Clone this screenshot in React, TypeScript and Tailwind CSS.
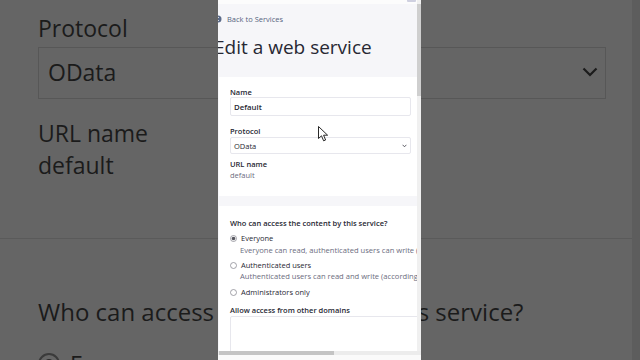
import React from "react";

function Radio({ checked }: { checked?: boolean }) {
  return (
    <svg width="7" height="7" viewBox="0 0 7 7" className="shrink-0">
      <circle cx="3.5" cy="3.5" r="3" fill="#fff" stroke="#8c8c94" strokeWidth="0.8" />
      {checked && <circle cx="3.5" cy="3.5" r="1.8" fill="#55555e" />}
    </svg>
  );
}

export default function App() {
  return (
    <div className="relative w-[640px] h-[360px] overflow-hidden bg-[#656565] font-['Open_Sans',sans-serif]">
      {/* blurred enlarged background */}
      <div className="flex h-full">
        <div className="flex-1 flex flex-col text-[#1b1b1b]">
          <div className="pl-[38px] pr-[26px]">
            <div className="mt-[14px] text-[23px] leading-[28px]">Protocol</div>
            <div className="mt-[5px] h-[52px] border border-[#575757] flex items-center justify-between pl-[9px] pr-[7px] pb-[3px]">
              <span className="text-[23px] leading-[28px]">OData</span>
              <svg width="16" height="10" viewBox="0 0 16 10">
                <path d="M1.5 1.5 L8 8 L14.5 1.5" fill="none" stroke="#1b1b1b" strokeWidth="2.2" />
              </svg>
            </div>
            <div className="mt-[20px] text-[23px] leading-[28px]">URL name</div>
            <div className="mt-[4px] text-[23px] leading-[28px]">default</div>
          </div>
          <div className="mt-[59px] h-[28px] bg-[#616161] border-b border-[#5a5a5a]" />
          <div className="pl-[38px] mt-[59px] text-[24px] leading-[28px] whitespace-nowrap">
            Who can access the content by this service?
          </div>
          <div className="pl-[38px] mt-[27px] flex items-start gap-[10px]">
            <div className="w-[22px] h-[22px] shrink-0 rounded-full border-[2px] border-[#3a3a3a] flex items-center justify-center">
              <div className="w-[10px] h-[10px] rounded-full bg-[#2a2a2a]" />
            </div>
            <span className="text-[23px] leading-[28px] mt-[-3px]">Everyone</span>
          </div>
        </div>
        <div className="w-[8px] bg-[#5d5d5d]" />
      </div>

      {/* portrait video panel */}
      <div className="absolute left-[218px] top-0 w-[203px] h-[360px] flex flex-col bg-[#f6f6f9] overflow-hidden">
        <div className="flex-1 flex min-h-0">
          <div className="flex-1 min-w-0 overflow-hidden flex flex-col">
            <div className="h-[4px] shrink-0 bg-[#fcfcfc]" />
            <div className="ml-[-4px] w-[203px] shrink-0">
              {/* header */}
              <div className="pt-[10px] pb-[18px]">
                <div className="flex items-center h-[10px] gap-[5px]">
                  <svg width="8" height="8" viewBox="0 0 8 8" className="shrink-0">
                    <circle cx="4" cy="4" r="3.5" fill="#5b6b8a" />
                    <path d="M4.8 2 L3 4 L4.8 6" fill="none" stroke="#fff" strokeWidth="0.9" />
                  </svg>
                  <span className="text-[7.5px] leading-[10px] text-[#56657f]">Back to Services</span>
                </div>
                <div className="mt-[11px] text-[19px] leading-[24px] text-[#272833] whitespace-nowrap">
                  Edit a web service
                </div>
              </div>

              {/* card 1 */}
              <div className="ml-[5px] bg-white pl-[11px] pt-[10px] pb-[16px]">
                <div className="text-[7.5px] leading-[10px] font-semibold text-[#272833]">Name</div>
                <div className="w-[181px] h-[19px] border border-[#e7e7ed] rounded-[2px] bg-white flex items-center pl-[3px]">
                  <span className="text-[7.8px] leading-[10px] font-semibold text-[#272833]">Default</span>
                </div>
                <div className="mt-[10px] text-[7.5px] leading-[10px] font-semibold text-[#272833]">Protocol</div>
                <div className="mt-[1px] w-[181px] h-[17px] border border-[#e7e7ed] rounded-[2px] bg-white flex items-center justify-between pl-[3px] pr-[3px]">
                  <span className="text-[7.5px] leading-[10px] text-[#272833]">OData</span>
                  <svg width="5" height="4" viewBox="0 0 5 4">
                    <path d="M0.6 0.8 L2.5 2.8 L4.4 0.8" fill="none" stroke="#3a3a44" strokeWidth="0.8" />
                  </svg>
                </div>
                <div className="mt-[5px] text-[7.5px] leading-[10px] font-semibold text-[#272833]">URL name</div>
                <div className="mt-[1px] text-[7.5px] leading-[10px] text-[#6b6c7e]">default</div>
              </div>

              <div className="h-[10px]" />

              {/* card 2 */}
              <div className="ml-[5px] bg-white pl-[11px] pt-[12px] pb-[20px]">
                <div className="text-[7.5px] leading-[10px] font-semibold text-[#272833] whitespace-nowrap">
                  Who can access the content by this service?
                </div>
                <div className="mt-[5px] flex items-center gap-[4px] h-[10px]">
                  <Radio checked />
                  <span className="text-[7.5px] leading-[10px] text-[#272833]">Everyone</span>
                </div>
                <div className="mt-[2px] pl-[10px] text-[7.6px] leading-[10px] text-[#6b6c7e] whitespace-nowrap">
                  Everyone can read, authenticated users can write (according to permissions)
                </div>
                <div className="mt-[5px] flex items-center gap-[4px] h-[10px]">
                  <Radio />
                  <span className="text-[7.5px] leading-[10px] text-[#272833]">Authenticated users</span>
                </div>
                <div className="mt-[1px] pl-[10px] text-[7.6px] leading-[10px] text-[#6b6c7e] whitespace-nowrap">
                  Authenticated users can read and write (according to permissions)
                </div>
                <div className="mt-[6px] flex items-center gap-[4px] h-[10px]">
                  <Radio />
                  <span className="text-[7.5px] leading-[10px] text-[#272833]">Administrators only</span>
                </div>
                <div className="mt-[8px] text-[7.5px] leading-[10px] font-semibold text-[#272833] whitespace-nowrap">
                  Allow access from other domains
                </div>
                <div className="mt-[1px] w-[220px] h-[60px] border border-[#e7e7ed] rounded-[2px] bg-white" />
              </div>
            </div>
          </div>
          {/* vertical scrollbar */}
          <div className="w-[4px] shrink-0 bg-[#f0f0f0] flex flex-col">
            <div className="h-[4px]" />
            <div className="h-[92px] bg-[#cfcfcf]" />
          </div>
        </div>
        {/* horizontal scrollbar */}
        <div className="h-[4px] shrink-0 flex bg-[#ececec]">
          <div className="ml-[1px] w-[115px] bg-[#c4c4c4]" />
        </div>
        <div className="h-[5px] shrink-0 bg-[#fafafa]" />
        <div className="absolute top-0 left-[189px] w-[9px] h-[2px] rounded-b-[1px] bg-[#cfd0e0]" />
      </div>

      {/* mouse pointer */}
      <svg className="absolute left-[318px] top-[126px]" width="11" height="16" viewBox="0 0 11 16">
        <path
          d="M0.5 0.5 L0.5 12.5 L3.5 9.8 L5.6 14.8 L7.6 14 L5.6 9.2 L9.6 9.2 Z"
          fill="#fff"
          stroke="#111"
          strokeWidth="0.9"
          strokeLinejoin="round"
        />
      </svg>
    </div>
  );
}
